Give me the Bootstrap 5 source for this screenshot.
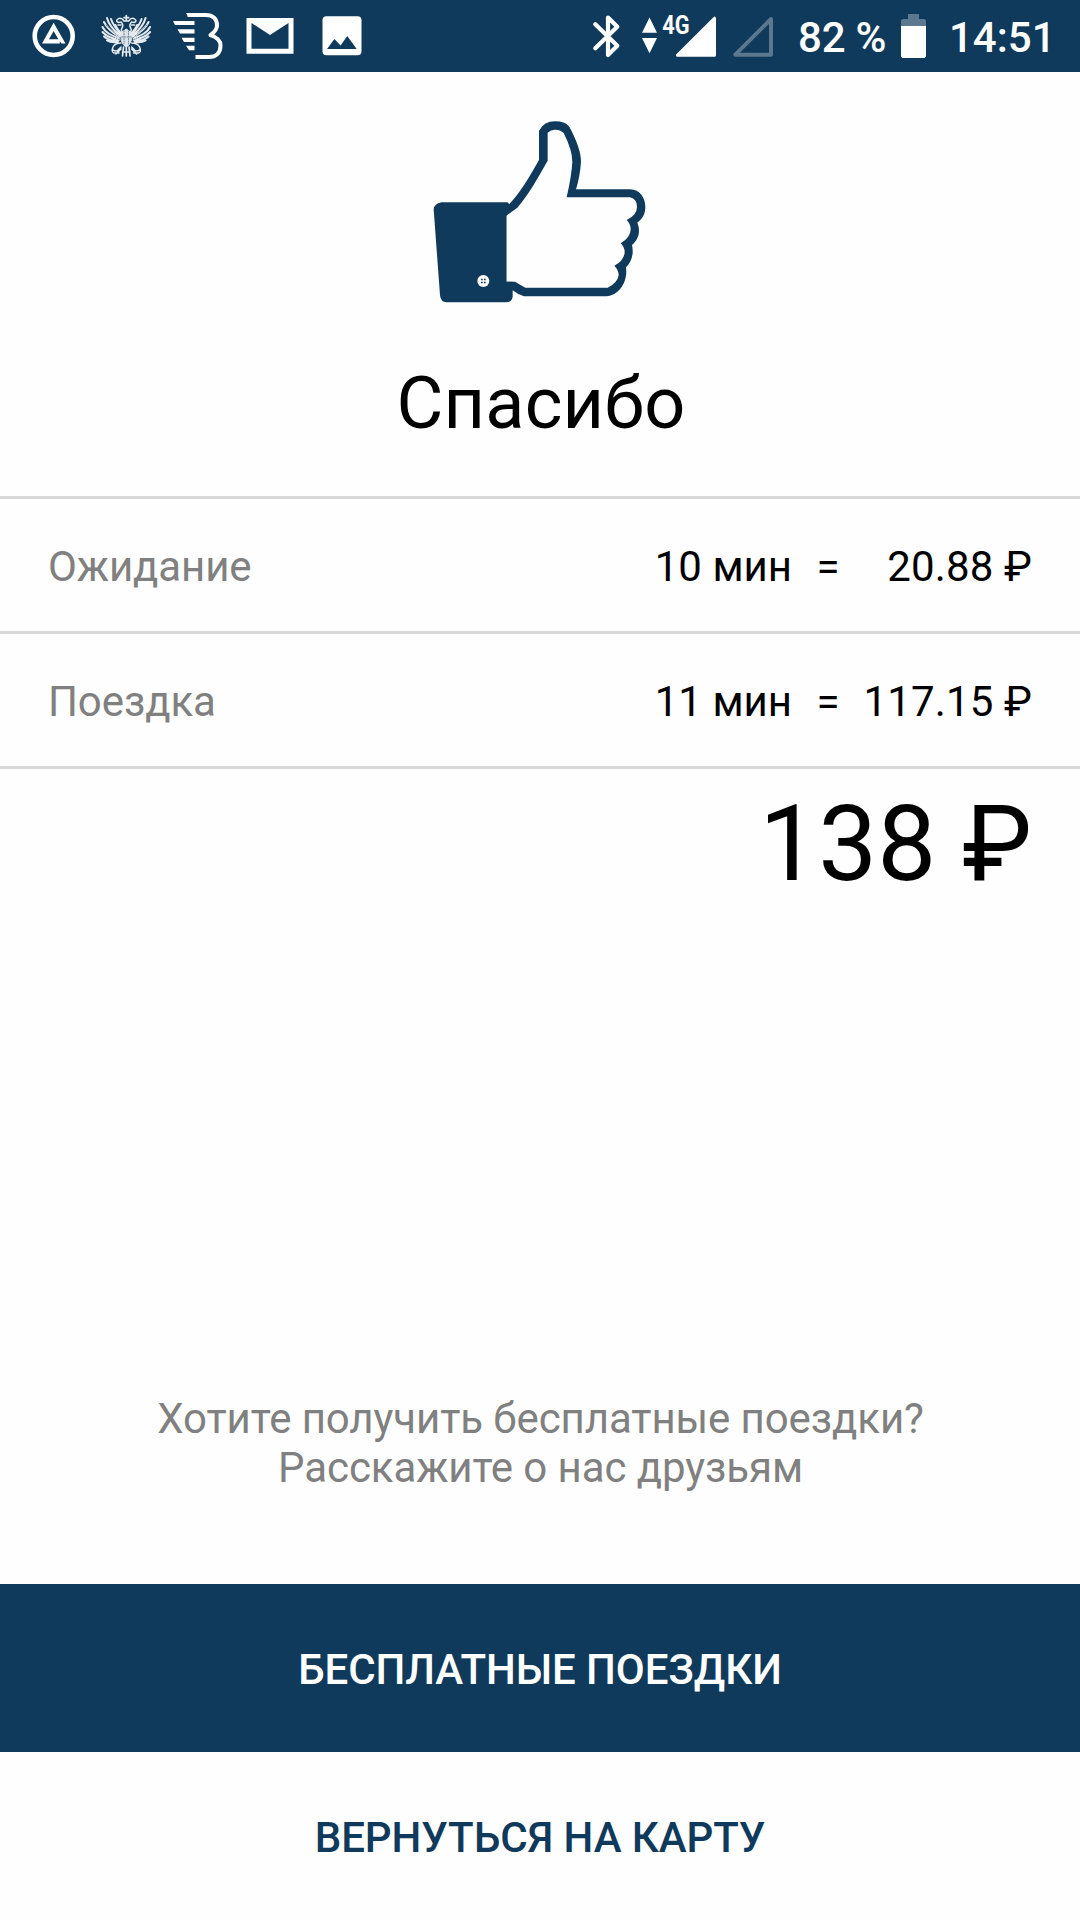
<!DOCTYPE html>
<html lang="ru">
<head>
<meta charset="utf-8">
<meta name="viewport" content="width=device-width, initial-scale=1">
<title>Спасибо</title>
<link href="https://cdn.jsdelivr.net/npm/bootstrap@5.3.0/dist/css/bootstrap.min.css" rel="stylesheet">
<style>
:root{--navy:#103a5b}
body{font-family:Roboto,"Noto Sans",sans-serif;font-size:42px;line-height:49px;color:#000;background:#fefefe}
.screen{height:1920px;overflow:hidden}
.statusbar{height:72px;background:var(--navy);color:#fff;font-weight:500}
.statusbar svg{display:block;flex:none}
.statusbar .level{width:100px;padding:3px 0 0 7px;letter-spacing:-.2px}
.statusbar .clock{width:144px;padding:3px 0 0 13px}
.thumb{margin-top:38px}
.thanks{font-size:72px;line-height:84px;margin:52px 0 0;padding-left:2px;font-weight:400;letter-spacing:.15px}
.fares{margin-top:50px;border-top:3px solid #d8d8d8}
.fare{height:135px;border-bottom:3px solid #d8d8d8;padding:3px 48px 0}
.muted-text{color:#808080;letter-spacing:-.09px}
.eq{width:72px}
.sum{width:168px;letter-spacing:.15px}
.total{font-size:105px;line-height:126px;padding:12.5px 48px 0}
.promo{margin-bottom:92px;padding-left:1px}
.action{height:168px;font-size:42px;font-weight:500;border:0;padding:3px 0 0;line-height:49px;color:var(--navy);letter-spacing:-.07px}
.action-main,.action-main:hover{background:var(--navy);color:#fff}
</style>
<script src="https://cdn.jsdelivr.net/npm/bootstrap@5.3.0/dist/js/bootstrap.bundle.min.js"></script>
</head>
<body>
<div class="screen d-flex flex-column">
  <header class="statusbar d-flex align-items-center justify-content-between text-nowrap">
    <div class="d-flex">
      <svg width="84" height="72" viewBox="0 0 84 72" fill="none"><circle cx="53.7" cy="36" r="19" stroke="#fff" stroke-width="4.6"/><path fill="#fff" fill-rule="evenodd" d="M53.6 22.700L65.500 43.400H61.300L59.800 41V43.400H42ZM53.600 31L49 39.300H58.400Z"/></svg>
      <svg width="78" height="72" viewBox="84 0 78 72" fill="none" stroke="#e6ebef" stroke-linecap="round">
        <g id="wing" stroke-width="2">
          <path d="M120 36Q109 26 107 18M119.500 37Q107 29 104 22M119 38.500Q106 34 102.500 27M119 40Q108 38 102.500 32M118 41Q109 41 104 36.500M118 42Q111 43 107 40.500M121 35Q113 25 111 19M122 34Q117 29 115.500 25"/>
          <path stroke-width="1.500" d="M124 21Q121 17 118 19Q115 21 118.500 22.500L121 22Q124 25 122 28T124 33M121 43Q115 43 113 47T117 51L121 47M113 47Q111 52 114 53L119 53M118 25L121 25M121 49L116 54"/>
        </g>
        <use href="#wing" transform="translate(252.600 0) scale(-1 1)"/>
        <path fill="#dce3e8" stroke-width="1" d="M122 32L126.300 29L130.600 32L131.500 40L129 45L126.300 47L123.500 45L121 40Z"/>
        <path stroke-width="1.700" d="M126.300 15.500V20M124 17.700H128.600M124.500 21H128M126.300 45V56M123.500 47L122.500 56M129 47L130 56M122.500 52H130"/>
        <path stroke="#537087" stroke-width=".8" stroke-dasharray="1 1.500" d="M106 25L121 39M147 25L132 39M107 34L120 40M146 34L133 40M124 31V44M128.500 31V44M122 37H131"/>
      </svg>
      <svg width="74" height="72" viewBox="162 0 74 72" fill="#fff"><path fill="none" stroke="#fff" stroke-width="4" stroke-linejoin="round" d="M187.500 15H206C213 15 217 19 217 25.500C217 30 214 32.500 210.500 35.200C216 37 220.500 40 220.500 45.500C220.500 53 216 57 209 57H195.500"/><path d="M186 13L188.500 17H190V13ZM173 21H194.500V25H175ZM177.500 29.300H194.500V33.600H180ZM181.500 37.700H194.500V42H184ZM186 45.700H194.500V50.300H189Z"/></svg>
      <svg width="68" height="72" viewBox="236 0 68 72"><path fill="#fff" d="M246.500 18H293.500V53.700H246.500Z"/><path fill="#103a5b" d="M251.500 23L270 35L288.500 23V48.700H251.500Z"/></svg>
      <svg width="66" height="72" viewBox="304 0 66 72"><rect x="322.500" y="16.300" width="39" height="39" rx="4" fill="#fff"/><path fill="#103a5b" d="M327 49L334.400 39L340.500 45.500L347.300 36L356.700 49Z"/></svg>
    </div>
    <div class="d-flex align-items-center">
      <svg width="50" height="72" viewBox="582 0 50 72" fill="none"><path stroke="#fff" stroke-width="4.200" stroke-linejoin="round" stroke-linecap="round" d="M595.300 24.300L617.300 45.800L608 55V17.500L617.300 26.800L595.300 48.300"/></svg>
      <svg width="92" height="72" viewBox="632 0 92 72" fill="#fff"><path d="M649.500 17.500L657 32.800H642ZM642 38H657L649.500 53.300Z"/><path stroke="#fff" stroke-width="3" stroke-linejoin="round" d="M714.500 18.200V55.300H677.400Z"/><text transform="translate(662.300 33.800) scale(.87 1)" font-family="Roboto, sans-serif" font-size="25" font-weight="700">4G</text></svg>
      <svg width="67" height="72" viewBox="724 0 67 72" fill="none"><path stroke="#5b788e" stroke-width="4" stroke-linejoin="round" d="M771 19V54.700H735.300Z"/></svg>
      <div class="level">82 %</div>
      <svg width="45" height="72" viewBox="891 0 45 72"><path fill="#5b788e" d="M908 14H919V19H924.500L926 20.500V26H901V20.500L902.500 19H908Z"/><path fill="#fff" d="M901 26H926V56.500L924.500 58H902.500L901 56.500Z"/></svg>
      <div class="clock">14:51</div>
    </div>
  </header>

  <main class="d-flex flex-column flex-grow-1">
    <svg class="thumb mx-auto d-block flex-shrink-0" width="240" height="200" viewBox="0 0 720 600" fill="#103a5b">
      <path d="M268 282C297 253 327 203 357 150V62Q372 34 405 34Q435 34 448 50Q483 115 483 155Q480 200 468 238H630C660 238 676 265 676 290C676 312 668 325 652 338C662 363 657 387 636 405C642 432 635 455 618 472C624 517 596 555 560 559H312Q297 555 280 542L250 530V290Z"/>
      <path fill="#fefefe" d="M259 317L292 293C325 255 353 205 383 152V68Q392 59 405 59Q422 59 431 69Q457 120 457 155Q455 195 440 262H630Q651 267 651 290Q651 315 620 330Q632 342 632 357Q632 382 602 400Q614 411 614 427Q612 452 583 467Q596 480 596 496Q592 520 563 533H316L285 515H259Z"/>
      <path d="M64 277H262L270 284L259 302V515H278V560Q275 577 258 577H80Q62 577 60 556L41 298Q43 281 64 277Z"/>
      <circle cx="190" cy="513" r="18" fill="#fefefe"/>
      <path d="M183 506H188V511H183ZM192 506H197V511H192ZM183 515H188V520H183ZM192 515H197V520H192Z"/>
    </svg>
    <h1 class="thanks text-center">Спасибо</h1>

    <section class="fares">
      <div class="fare d-flex align-items-center text-nowrap">
        <span class="muted-text me-auto">Ожидание</span><span>10 мин</span><span class="eq text-center">=</span><span class="sum d-flex justify-content-end flex-shrink-0">20.88 ₽</span>
      </div>
      <div class="fare d-flex align-items-center text-nowrap">
        <span class="muted-text me-auto">Поездка</span><span>11 мин</span><span class="eq text-center">=</span><span class="sum d-flex justify-content-end flex-shrink-0">117.15 ₽</span>
      </div>
    </section>
    <div class="total text-end">138 ₽</div>

    <p class="promo muted-text text-center mt-auto">Хотите получить бесплатные поездки?<br>Расскажите о нас друзьям</p>
    <button class="action action-main btn rounded-0 w-100" type="button">БЕСПЛАТНЫЕ ПОЕЗДКИ</button>
    <button class="action btn rounded-0 w-100" type="button">ВЕРНУТЬСЯ НА КАРТУ</button>
  </main>
</div>
</body>
</html>
